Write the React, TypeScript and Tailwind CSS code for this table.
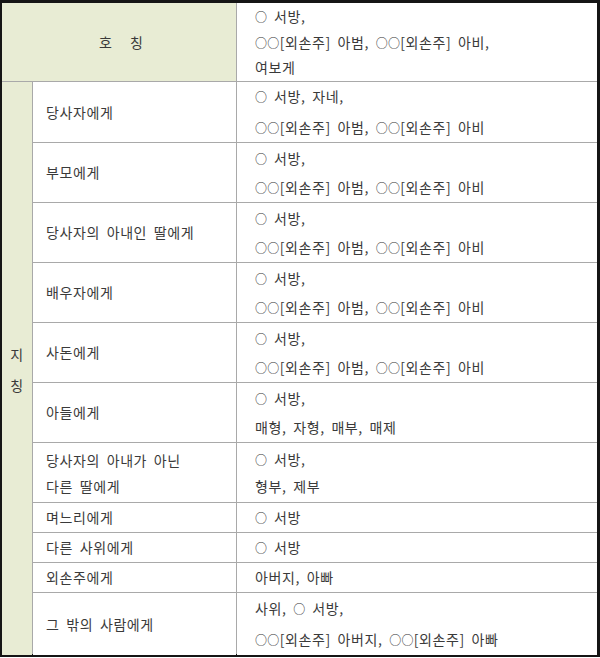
const font = { fontFamily: '"Noto Sans CJK KR", "Noto Sans", sans-serif' }

interface Row {
  label: string[]
  value: string[]
  h: string
  lh: string
}

const rows: Row[] = [
  { label: ["당사자에게"], value: ["○ 서방, 자네,", "○○[외손주] 아범, ○○[외손주] 아비"], h: "h-[60px]", lh: "leading-[31px]" },
  { label: ["부모에게"], value: ["○ 서방,", "○○[외손주] 아범, ○○[외손주] 아비"], h: "h-[59px]", lh: "leading-[29px]" },
  { label: ["당사자의 아내인 딸에게"], value: ["○ 서방,", "○○[외손주] 아범, ○○[외손주] 아비"], h: "h-[59px]", lh: "leading-[29px]" },
  { label: ["배우자에게"], value: ["○ 서방,", "○○[외손주] 아범, ○○[외손주] 아비"], h: "h-[59px]", lh: "leading-[29px]" },
  { label: ["사돈에게"], value: ["○ 서방,", "○○[외손주] 아범, ○○[외손주] 아비"], h: "h-[59px]", lh: "leading-[29px]" },
  { label: ["아들에게"], value: ["○ 서방,", "매형, 자형, 매부, 매제"], h: "h-[59px]", lh: "leading-[29px]" },
  { label: ["당사자의 아내가 아닌", "다른 딸에게"], value: ["○ 서방,", "형부, 제부"], h: "h-[59px]", lh: "leading-[26px]" },
  { label: ["며느리에게"], value: ["○ 서방"], h: "h-[29px]", lh: "leading-[29px]" },
  { label: ["다른 사위에게"], value: ["○ 서방"], h: "h-[29px]", lh: "leading-[29px]" },
  { label: ["외손주에게"], value: ["아버지, 아빠"], h: "h-[29px]", lh: "leading-[29px]" },
  { label: ["그 밖의 사람에게"], value: ["사위, ○ 서방,", "○○[외손주] 아버지, ○○[외손주] 아빠"], h: "h-[61px]", lh: "leading-[30px]" },
]

// the ○ glyph in the CJK font is full width; the original prints it small
function Line({ text }: { text: string }) {
  const parts = text.split(/(○)/)
  return (
    <div className="whitespace-nowrap">
      {parts.map((p, i) =>
        p === "○" ? (
          <span key={i} className="text-[12px] font-medium tracking-[0.3px] text-[#333]">○</span>
        ) : (
          <span key={i}>{p}</span>
        )
      )}
    </div>
  )
}

export default function App() {
  return (
    <div className="w-[600px] h-[658px] bg-white" style={font}>
      <div className="w-[600px] h-[657px] border-l-2 border-t-[3px] border-r-[3px] border-b-[3px] border-[#151515] bg-[#a9a9a9]">
        <div className="flex flex-col gap-px h-full text-[14px] text-[#3a3a3a] tracking-[0.6px] [word-spacing:3px]">
          {/* header */}
          <div className="flex gap-px h-[78px] shrink-0">
            <div className="w-[234px] bg-[#e8ecd4] flex items-center justify-center pl-[6px]">
              <span className="tracking-[2px]">호&nbsp;&nbsp;칭</span>
            </div>
            <div className="flex-1 bg-white flex flex-col justify-center pl-[18px] leading-[24.5px]">
              <Line text="○ 서방," />
              <Line text="○○[외손주] 아범, ○○[외손주] 아비," />
              <Line text="여보게" />
            </div>
          </div>

          <div className="flex gap-px flex-1">
            <div className="w-[30px] bg-[#e8ecd4] flex flex-col items-center justify-center leading-[31px] pt-[2px]">
              <div>지</div>
              <div>칭</div>
            </div>
            <div className="flex-1 flex flex-col gap-px">
              {rows.map((r, i) => (
                <div key={i} className={`flex gap-px shrink-0 ${r.h} ${i === rows.length - 1 ? "flex-1" : ""}`}>
                  <div className={`w-[203px] bg-white flex flex-col justify-center pl-[13px] ${r.lh}`}>
                    {r.label.map((t, j) => (
                      <Line key={j} text={t} />
                    ))}
                  </div>
                  <div className={`flex-1 bg-white flex flex-col justify-center pl-[18px] ${r.lh}`}>
                    {r.value.map((t, j) => (
                      <Line key={j} text={t} />
                    ))}
                  </div>
                </div>
              ))}
            </div>
          </div>
        </div>
      </div>
    </div>
  )
}
